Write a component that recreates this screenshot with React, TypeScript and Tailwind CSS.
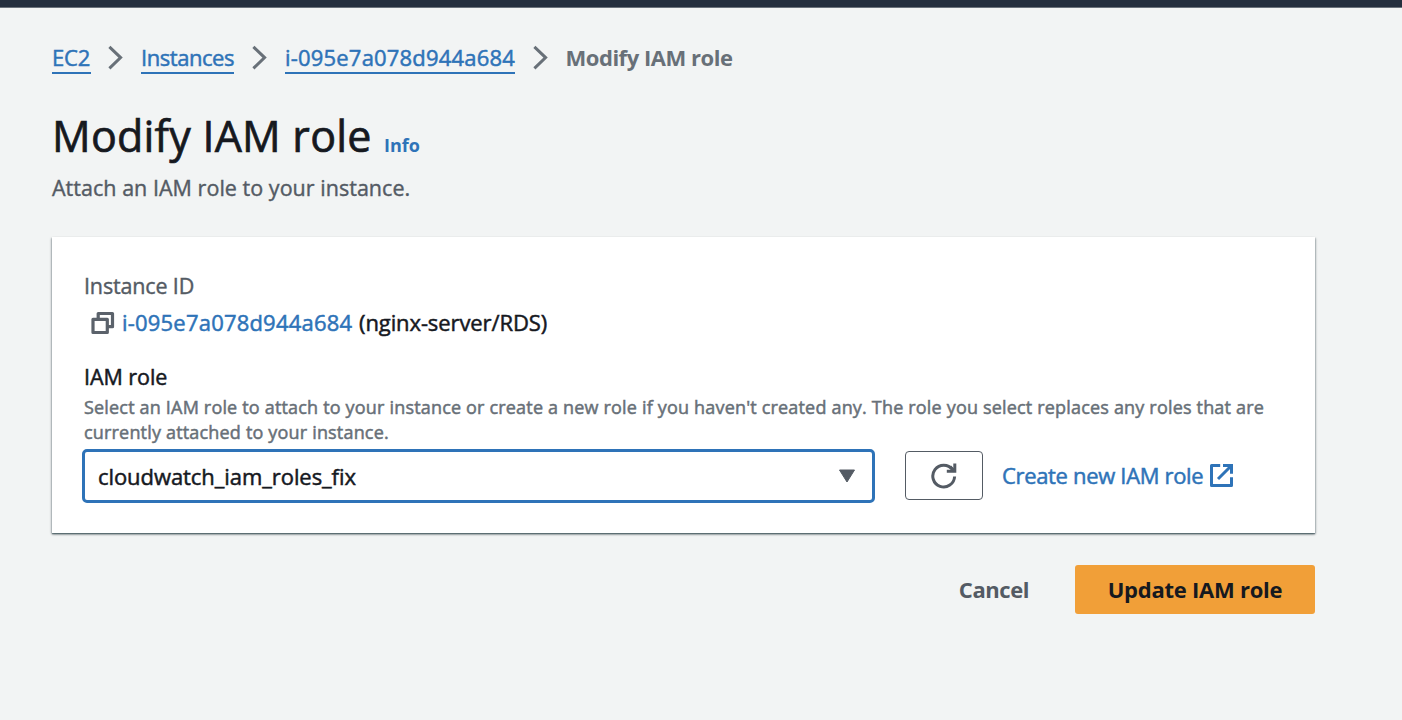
import type { ReactNode } from "react";

function Chevron() {
  return (
    <svg className="mx-[16px] mt-[2px] block h-[26px] w-[18px] shrink-0" viewBox="0 0 18 26" fill="none" stroke="#687078" strokeWidth="3">
      <path d="M2.4 2.8 13.6 13.6 2.4 24.4" />
    </svg>
  );
}

function Crumb({ children, className }: { children: ReactNode; className: string }) {
  return (
    <a className={`block h-[32px] shrink-0 border-b-2 border-[#2e73b8] leading-[31px] text-[#2e73b8] ${className}`}>{children}</a>
  );
}

function CopyIcon() {
  return (
    <svg className="mt-[2px] block h-[24px] w-[24px] shrink-0" viewBox="0 0 24 24" fill="none" stroke="#5b626b" strokeWidth="3.2" strokeLinejoin="round">
      <path d="M2 8.3h14.3v13.2H2z" />
      <path d="M7.2 8V2.5H21.5v13.2H16.5" />
    </svg>
  );
}

function RefreshIcon() {
  return (
    <svg className="block h-[26px] w-[26px]" viewBox="0 0 26 26" fill="none" stroke="#545b64" strokeWidth="3">
      <path d="M23.6 13.5A10.9 10.9 0 1 1 21.5 6.6" />
      <path d="M23.8.5V8.2H15.8" />
      <path d="M19 3.5l4.8 4.7" />
    </svg>
  );
}

function ExternalIcon() {
  return (
    <svg className="mt-[1px] block h-[23px] w-[23px] shrink-0" viewBox="0 0 23 23" fill="none" stroke="#2e73b8" strokeWidth="3">
      <path d="M10.2 1.5H1.5V21.5H21.5V13.3" strokeLinejoin="round" />
      <path d="M13 1.5H21.5V9.8" />
      <path d="M8 15 21 2" />
    </svg>
  );
}

export default function App() {
  return (
    <div className="h-[720px] w-[1402px] overflow-hidden bg-[#f2f4f4] font-['Open_Sans','Noto_Sans',sans-serif] text-[22px] text-[#16191f] [-webkit-text-stroke:0.5px_currentColor]">
      <header className="h-[8px] border-b border-[#6b727b] bg-[#252f3e]" />

      <main className="ml-[52px] w-[1263px] whitespace-nowrap">
        <nav className="flex h-[66px] pt-[34px]">
          <Crumb className="w-[39px] tracking-[-0.2px]">EC2</Crumb>
          <Chevron />
          <Crumb className="mr-[1px] w-[93px] tracking-[-0.45px]">Instances</Crumb>
          <Chevron />
          <Crumb className="mr-[1px] w-[230px] tracking-[0.19px]">i-095e7a078d944a684</Crumb>
          <Chevron />
          <span className="-ml-[0.5px] leading-[31px] font-bold tracking-[-0.47px] text-[#687078] [-webkit-text-stroke:0px]">Modify IAM role</span>
        </nav>

        <div className="flex items-baseline pt-[34px]">
          <h1 className="w-[332px] text-[43px] leading-[55px] font-normal tracking-[0.22px] [-webkit-text-stroke:0.7px_currentColor]">Modify IAM role</h1>
          <a className="text-[18px] leading-[24px] font-bold text-[#2e73b8] [-webkit-text-stroke:0px]">Info</a>
        </div>
        <p className="mt-[10px] text-[21.5px] leading-[30px] tracking-[0.03px] text-[#545b64] [-webkit-text-stroke:0.4px_currentColor]">Attach an IAM role to your instance.</p>

        <section className="mt-[34px] h-[296px] bg-white px-[32px] pt-[34px] shadow-[0_1px_1px_0_rgba(0,28,36,0.35),0_2px_2px_0_rgba(0,28,36,0.2),1px_1px_2px_0_rgba(0,28,36,0.22),-1px_1px_2px_0_rgba(0,28,36,0.22)]">
          <div className="text-[21.5px] leading-[30px] tracking-[-0.15px] text-[#545b64] [-webkit-text-stroke:0.4px_currentColor]">Instance ID</div>
          <div className="mt-[5px] flex h-[32px] items-center pl-[7px]">
            <CopyIcon />
            <a className="ml-[7px] w-[237px] text-[22px] tracking-[0.2px] text-[#2e73b8]">i-095e7a078d944a684</a>
            <span className="tracking-[-0.1px]">(nginx-server/RDS)</span>
          </div>
          <label className="mt-[23px] block text-[21.5px] leading-[32px] tracking-[-0.05px]">IAM role</label>
          <p className="mt-[2px] text-[18px] leading-[25px] tracking-[0.18px] text-[#687078] [-webkit-text-stroke:0.5px_currentColor]">
            Select an IAM role to attach to your instance or create a new role if you haven't created any. The role you select replaces any roles that are
            <br />
            currently attached to your instance.
          </p>
          <div className="mt-[4px] flex h-[54px] items-center">
            <div className="-ml-[2px] flex h-[54px] w-[793px] shrink-0 items-center justify-between rounded-[5px] border-[3px] border-[#2e73b8] pr-[16px] pl-[13px]">
              <span className="tracking-[-0.07px]">cloudwatch_iam_roles_fix</span>
              <svg className="block h-[14px] w-[18px]" viewBox="0 0 18 14" fill="#545b64" stroke="#545b64" strokeLinejoin="round">
                <path d="M1.5 1h15L9 13z" />
              </svg>
            </div>
            <button className="mb-[1px] ml-[30px] flex h-[49px] w-[78px] shrink-0 items-center justify-center rounded-[4px] border border-[#545b64]">
              <RefreshIcon />
            </button>
            <a className="mb-[2px] ml-[19px] flex items-center text-[#2e73b8]">
              <span className="w-[208px] tracking-[-0.33px]">Create new IAM role</span>
              <ExternalIcon />
            </a>
          </div>
        </section>

        <div className="mt-[32px] flex justify-end font-bold [-webkit-text-stroke:0px]">
          <button className="mr-[13px] h-[49px] w-[136px] tracking-[-0.4px] text-[#545b64]">Cancel</button>
          <button className="h-[49px] w-[240px] rounded-[3px] bg-[#f19f38] tracking-[-0.25px]">Update IAM role</button>
        </div>
      </main>
    </div>
  );
}
